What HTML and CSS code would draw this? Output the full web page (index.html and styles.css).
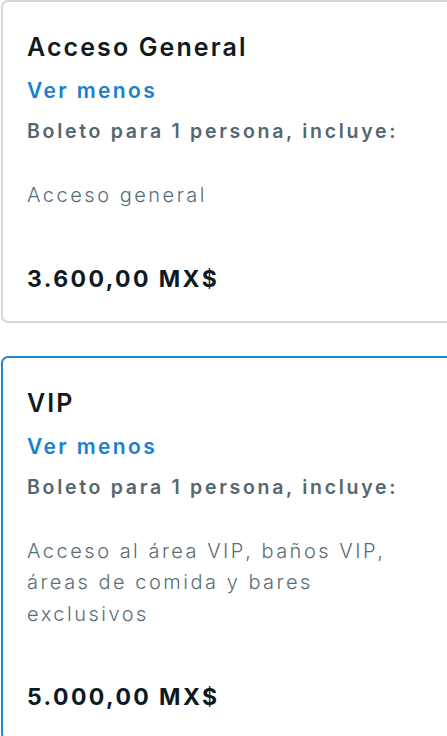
FILE: index.html
```html
<!DOCTYPE html>
<html lang="es">
<head>
  <meta charset="UTF-8" />
  <meta name="viewport" content="width=device-width, initial-scale=1.0" />
  <title>Boletos</title>
  <link rel="stylesheet" href="styles.css">
</head>
<body>
  <div class="ticket-list">
    <div class="ticket">
      <h2 class="ticket-name">Acceso General</h2>
      <a class="toggle-link" href="#">Ver menos</a>
      <p class="ticket-intro">Boleto para 1 persona, incluye:</p>
      <p class="ticket-desc">Acceso general</p>
      <p class="ticket-price">3.600,00 MX$</p>
    </div>

    <div class="ticket selected">
      <h2 class="ticket-name">VIP</h2>
      <a class="toggle-link" href="#">Ver menos</a>
      <p class="ticket-intro">Boleto para 1 persona, incluye:</p>
      <p class="ticket-desc">Acceso al área VIP, baños VIP, áreas de comida y bares exclusivos</p>
      <p class="ticket-price">5.000,00 MX$</p>
    </div>
  </div>
</body>
</html>
```

FILE: styles.css
```css
body {
  margin: 0;
  font-family: Inter, "Open Sans", sans-serif;
  background: #ffffff;
  overflow: hidden;
}

.ticket-list {
  display: flex;
  flex-direction: column;
  gap: 33px;
  padding-left: 1px;
}

.ticket {
  width: 470px;
  box-sizing: border-box;
  border: 2px solid #d1d6db;
  border-radius: 7px;
  padding: 29px 24px 27px;
  display: flex;
  flex-direction: column;
  align-items: flex-start;
}

.ticket.selected {
  border-color: #1a88d8;
}

.ticket-name {
  margin: 0;
  font-size: 25px;
  line-height: 32px;
  font-weight: 600;
  color: #0f1b21;
  letter-spacing: 2.1px;
}

.toggle-link {
  margin-top: 14px;
  font-size: 21px;
  line-height: 28px;
  font-weight: 600;
  color: #1a7fd0;
  text-decoration: none;
  letter-spacing: 2.4px;
}

.ticket-intro {
  margin: 12px 0 0;
  font-size: 19.5px;
  line-height: 28px;
  font-weight: 600;
  color: #546770;
  letter-spacing: 2.7px;
}

.ticket-desc {
  margin: 35px 0 0;
  width: 372px;
  font-size: 20px;
  line-height: 31.5px;
  font-weight: 300;
  color: #5a6d76;
  letter-spacing: 2.5px;
}

.ticket-price {
  margin: 52px 0 0;
  font-size: 23px;
  line-height: 30px;
  font-weight: 700;
  color: #0e1a1f;
  letter-spacing: 2.4px;
}
```
